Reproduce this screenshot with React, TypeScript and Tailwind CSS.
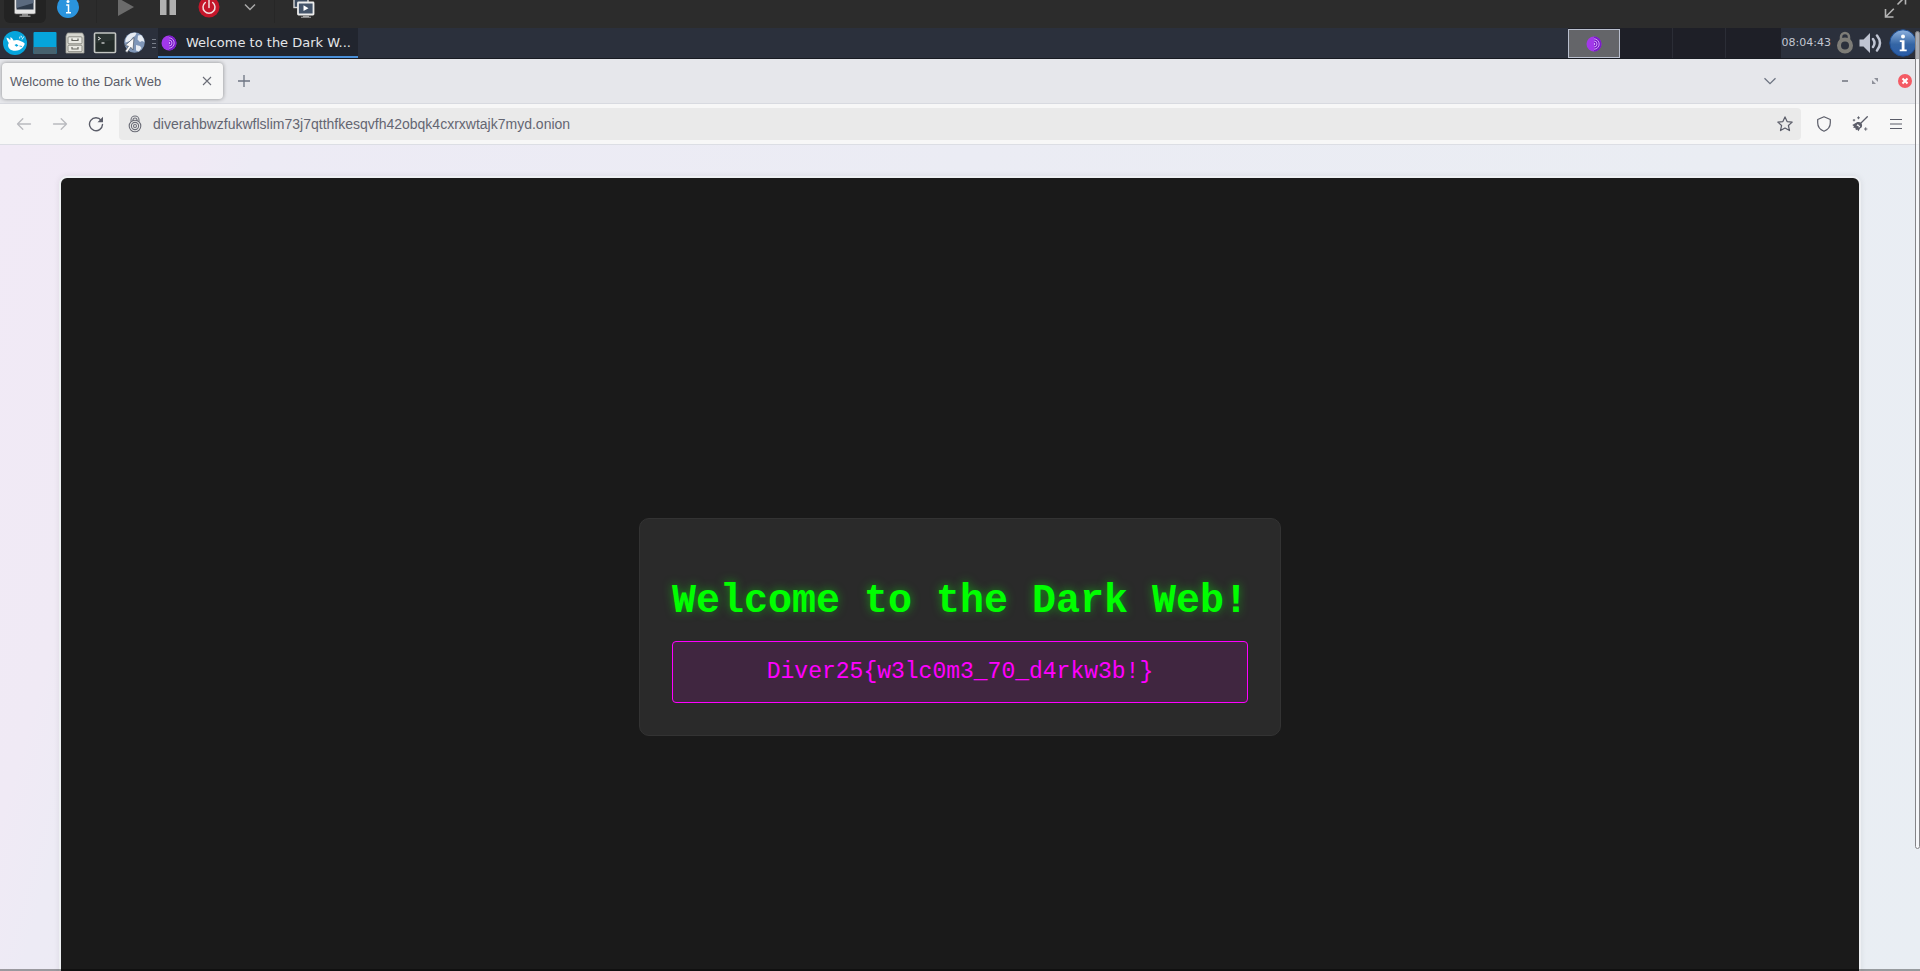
import React from 'react';

function MonitorIcon() {
  return (
    <svg viewBox="0 0 24 24" className="h-6 w-6">
      <rect x="1.500" y="0" width="21" height="19" rx="1.500" fill="#e6e6e6" stroke="#6b6b6b" strokeWidth="0.6" />
      <rect x="3.500" y="1" width="17" height="13.500" fill="#2e3a4a" />
      <path d="M3.500 1h17v7l-17 5z" fill="#5b6a7f" />
      <path d="M9 19h6v1.500h2.500V22h-11v-1.500H9z" fill="#8d8d8d" />
    </svg>
  );
}

function InfoIcon() {
  return (
    <svg viewBox="0 0 24 24" className="h-6 w-6">
      <circle cx="12" cy="12" r="11" fill="#2a94de" />
      <circle cx="12" cy="6.500" r="1.500" fill="#fff" />
      <path d="M10.200 10h2.300v7.500M10 17.800h5" stroke="#fff" strokeWidth="1.500" fill="none" />
    </svg>
  );
}

function PowerIcon() {
  return (
    <svg viewBox="0 0 24 24" className="h-6 w-6">
      <circle cx="12" cy="12" r="10.500" fill="#c4162a" />
      <path d="M8.300 7.500a6 6 0 1 0 7.400 0" fill="none" stroke="#f2dfe1" strokeWidth="1.500" strokeLinecap="round" />
      <path d="M12 5v7.500" stroke="#f2dfe1" strokeWidth="1.500" strokeLinecap="round" />
    </svg>
  );
}

function DisplaysIcon() {
  return (
    <svg viewBox="0 0 24 24" className="h-6 w-6">
      <rect x="2" y="0" width="14" height="12.500" fill="#3b4a5e" stroke="#d5d5d5" strokeWidth="1.400" />
      <rect x="6" y="7.500" width="15.500" height="12" rx="0.500" fill="#44546a" stroke="#ececec" strokeWidth="1.800" />
      <path d="M11.500 10.300l5 2.900-5 2.900z" fill="#fff" />
      <path d="M11 20.800h6v1h2v1H9v-1h2z" fill="#a8a8a8" />
    </svg>
  );
}

function ExpandIcon() {
  return (
    <svg viewBox="0 0 24 24" className="h-6 w-6" fill="none" stroke="#b4b4b4" strokeWidth="1.600">
      <path d="M2.500 14v8h8M2.800 21.700l8-8M14.500 9.500l8-8M14.500 1.500h8v8" />
    </svg>
  );
}

function XfceIcon() {
  return (
    <svg viewBox="0 0 24 24" className="h-6 w-6">
      <circle cx="12" cy="12" r="12" fill="#06a5dc" />
      <path d="M3.500 6.500C5.200 7 6.500 8 7.300 9.300L7.500 6c1.400.8 2.400 2 3 3.600 2.500-1 5-.9 6.800.3 1.800.6 3.300 1.300 4.500 2.900-.8 2.500-2.500 5-5.500 6.300-3.500 1.300-8 .7-9.800-1.400C4.700 15.800 4.700 13.600 5.800 12 4.800 10.300 3.500 8.500 3.500 6.500z" fill="#fff" />
      <path d="M11.500 14l2-1 2 1.500-2 1.200z" fill="#06a5dc" />
      <path d="M16.500 15l2.500.5" stroke="#06a5dc" strokeWidth="0.800" />
      <path d="M16.500 7.500l.5-2M19 8.500l1.800-3M18.700 6.500l-.7-1.800" stroke="#d9f3fc" strokeWidth="1" />
    </svg>
  );
}

function DesktopIcon() {
  return (
    <svg viewBox="0 0 24 24" className="h-6 w-6">
      <rect x="0.500" y="1" width="23" height="22" rx="1" fill="#06a5dc" />
      <path d="M0.500 16h23v6a1 1 0 0 1-1 1h-21a1 1 0 0 1-1-1z" fill="#47626f" />
    </svg>
  );
}

function CabinetIcon() {
  return (
    <svg viewBox="0 0 24 24" className="h-6 w-6">
      <path d="M4.500 2h15l1.500 3v17H3V5z" fill="#d6d6cf" stroke="#9a9a93" strokeWidth="0.800" />
      <rect x="5" y="5.800" width="14" height="7" rx="1" fill="#e9e9e3" stroke="#8a8a83" strokeWidth="1" />
      <rect x="5" y="14.200" width="14" height="6.500" rx="1" fill="#e9e9e3" stroke="#8a8a83" strokeWidth="1" />
      <path d="M9 7.500v2h6v-2M9 16v2h6v-2" fill="none" stroke="#66665f" strokeWidth="1.200" />
    </svg>
  );
}

function TerminalIcon() {
  return (
    <svg viewBox="0 0 24 24" className="h-6 w-6">
      <rect x="1.500" y="2" width="21" height="19.500" rx="1" fill="#2b3432" stroke="#c4c6c3" strokeWidth="1.600" />
      <path d="M3 12l18-3v11.500H3z" fill="#222a28" />
      <path d="M5 6l2.500 1.500L5 9" fill="none" stroke="#e8e8e8" strokeWidth="1" />
      <path d="M8.500 12h3" stroke="#e8e8e8" strokeWidth="1.200" />
    </svg>
  );
}

function GlobeIcon() {
  return (
    <svg viewBox="0 0 24 24" className="h-6 w-6">
      <circle cx="11.500" cy="11.500" r="10.300" fill="#7f96b8" />
      <path d="M4 5.500C7 2 11 1.300 13.500 2.200L12 5 9.500 6.500 7 10l-4.500 1.500C2 9 3 7 4 5.500zM15 4.500l3-.5c2 2 3.200 4.500 3.400 7l-2.400-1-2 1-2.500-2.500zM13 14l4 1 1.500 2-2.500 3.500-3-1z" fill="#e7ecf3" />
      <path d="M11 6.500L10 19l-2.200-2.700-3.600 5.200-2-1.400 3.300-4.900L2 14.500z" fill="#f7f7f7" stroke="#4b5563" strokeWidth="0.700" />
    </svg>
  );
}

function OnionIcon() {
  return (
    <svg viewBox="0 0 16 16" className="h-4 w-4">
      <circle cx="8" cy="8" r="7.500" fill="#a238ea" />
      <path d="M8 0.500a7.500 7.500 0 0 1 0 15z" fill="#7a1cc8" />
      <path d="M8 2.800a5.200 5.200 0 0 1 0 10.400M8 5a3 3 0 0 1 0 6" fill="none" stroke="#d9a5ff" strokeWidth="0.900" />
      <path d="M8 6.800a1.200 1.200 0 0 1 0 2.400z" fill="#d9a5ff" />
    </svg>
  );
}

function TrayLockIcon() {
  return (
    <svg viewBox="0 0 18 24" className="h-6 w-[18px]" fill="none" stroke="#7d7c77">
      <path d="M5 9.500V6a4 4 0 0 1 8 0v3.500" strokeWidth="2.500" />
      <circle cx="9" cy="14.500" r="6" strokeWidth="4" />
    </svg>
  );
}

function SpeakerIcon() {
  return (
    <svg viewBox="0 0 26 24" className="h-6 w-[26px]">
      <path d="M1.500 8.500h4L12 2v20l-6.500-6.500h-4z" fill="#bfc4d2" />
      <path d="M15 8q3 4 0 8M19 4.500q6 7.500 0 15" fill="none" stroke="#bfc4d2" strokeWidth="2.500" strokeLinecap="round" />
    </svg>
  );
}

function TrayInfoIcon() {
  return (
    <svg viewBox="0 0 28 28" className="h-7 w-7">
      <defs>
        <linearGradient id="tray-info" x1="0" y1="0" x2="0" y2="1">
          <stop offset="0" stopColor="#8fb3e0" />
          <stop offset="0.550" stopColor="#3465a4" />
          <stop offset="1" stopColor="#2a5ca8" />
        </linearGradient>
      </defs>
      <circle cx="14" cy="14" r="13.200" fill="url(#tray-info)" stroke="#1f4e92" strokeWidth="1" />
      <circle cx="14" cy="7.500" r="2" fill="#fff" />
      <path d="M10.800 11.200h4.700v9.300h2.200v1.700h-7v-1.700h2v-7.600h-1.900z" fill="#fff" />
    </svg>
  );
}

function ArrowIcon({ forward = false }: { forward?: boolean }) {
  return (
    <svg viewBox="0 0 16 16" className="h-4 w-4" fill="none" stroke="#b9babf" strokeWidth="1.300" strokeLinecap="round" strokeLinejoin="round">
      {forward ? <path d="M1.500 8h13M9.200 2.700L14.500 8l-5.300 5.300" /> : <path d="M14.500 8h-13M6.800 2.700L1.500 8l5.300 5.300" />}
    </svg>
  );
}

function ReloadIcon() {
  return (
    <svg viewBox="0 0 16 16" className="h-4 w-4">
      <path d="M13.200 4.300A6.500 6.500 0 1 0 14.500 8.500" fill="none" stroke="#5b5d69" strokeWidth="1.400" strokeLinecap="round" />
      <path d="M15 0.700v5.500H9.500z" fill="#5b5d69" />
    </svg>
  );
}

function OnionLockIcon() {
  return (
    <svg viewBox="0 0 14 18" className="h-[18px] w-[14px]" fill="none" stroke="#6b6d77" strokeWidth="1.100">
      <path d="M3 6.500V5a4 4 0 0 1 8 0v1.500M5 6V5a2 2 0 0 1 4 0v1" />
      <circle cx="7" cy="11" r="5.800" />
      <circle cx="7" cy="11" r="3.600" />
      <circle cx="7" cy="11" r="1.500" />
    </svg>
  );
}

function StarIcon() {
  return (
    <svg viewBox="0 0 16 16" className="h-4 w-4" fill="none" stroke="#5b5d69" strokeWidth="1.200" strokeLinejoin="round">
      <path d="M8 0.900l2.100 4.700 5.100.5-3.800 3.400 1.100 5.100L8 12l-4.500 2.600 1.100-5.100L.8 6.100l5.100-.5z" />
    </svg>
  );
}

function ShieldIcon() {
  return (
    <svg viewBox="0 0 16 16" className="h-4 w-4" fill="none" stroke="#5b5d69" strokeWidth="1.200" strokeLinejoin="round">
      <path d="M8 .8l6.300 2.700v3.300c0 3.700-2.500 7-6.300 8.400C4.200 13.800 1.700 10.500 1.700 6.800V3.500z" />
    </svg>
  );
}

function BroomIcon() {
  return (
    <svg viewBox="0 0 16 16" className="h-4 w-4">
      <path d="M15.300.7L8.500 7.500" stroke="#5b5d69" strokeWidth="1.300" strokeLinecap="round" />
      <path d="M4.500 6.500c1.300-.8 3.500-.4 4.500.5s1.500 2.700.7 4.200L8 12.500l-1.500 2.800-1.300-1.900L4 14.200l-.8-2.500-1.900.3.600-1.800L.3 8.900z" fill="#5b5d69" />
      <path d="M5.700 8l2.600 2.500-1.500 1.200-.4-1.700-1.900-.3z" fill="#f7f7f7" />
      <path d="M6.500.3v2.900M5 1.800h3M2 3v2.400M.8 4.200h2.400M13.700 11.300v3.400M12 13h3.400" stroke="#5b5d69" strokeWidth="0.900" />
    </svg>
  );
}

export default function App() {
  return (
    <div className="relative flex h-screen flex-col overflow-hidden bg-[#e9edf2] font-['Liberation_Sans',sans-serif]">
      <header className="h-7 shrink-0 overflow-hidden bg-[#2c2c2c]">
        <div className="-mt-[9px] flex h-8 items-center">
          <button aria-label="Console" className="ml-1 flex h-8 w-[42px] items-center justify-center rounded-md bg-[#232323]"><MonitorIcon /></button>
          <button aria-label="Details" className="ml-2.5 flex h-6 w-6"><InfoIcon /></button>
          <span className="ml-4 h-8 w-px bg-[#272727]" />
          <button aria-label="Run" className="ml-5 flex h-6 w-[18px] items-center">
            <svg viewBox="0 0 18 20" className="h-5 w-[18px]"><path d="M1 1l16 9-16 9z" fill="#6b6b6b" /></svg>
          </button>
          <button aria-label="Pause" className="ml-[25px] flex h-6 w-4 items-center">
            <svg viewBox="0 0 16 16" className="h-4 w-4"><path d="M0 0h6.500v16H0zM9.500 0H16v16H9.500z" fill="#b0b0b0" /></svg>
          </button>
          <button aria-label="Shut down" className="ml-[21px] flex h-6 w-6"><PowerIcon /></button>
          <button aria-label="Shut down options" className="ml-[23px] flex h-6 w-3 items-center">
            <svg viewBox="0 0 12 8" className="h-2 w-3"><path d="M1 1.500l5 5 5-5" fill="none" stroke="#a9a9a9" strokeWidth="1.500" /></svg>
          </button>
          <span className="ml-[18px] h-8 w-px bg-[#272727]" />
          <button aria-label="Snapshots" className="ml-[17px] flex h-6 w-6"><DisplaysIcon /></button>
          <button aria-label="Fullscreen" className="mr-[13px] ml-auto flex h-6 w-6"><ExpandIcon /></button>
        </div>
      </header>

      <div className="flex h-[31px] shrink-0 items-stretch border-b border-[#181b22] bg-[#2b303c]">
        <nav aria-label="Launchers" className="flex items-center gap-1.5 pl-[3px]">
          <button aria-label="Applications"><XfceIcon /></button>
          <button aria-label="Show desktop"><DesktopIcon /></button>
          <button aria-label="Files"><CabinetIcon /></button>
          <button aria-label="Terminal"><TerminalIcon /></button>
          <button aria-label="Web browser"><GlobeIcon /></button>
        </nav>
        <span className="ml-[5px] flex w-1 flex-col justify-center gap-[3px]">
          <i className="h-px bg-[#7a7f8a]" />
          <i className="h-px bg-[#7a7f8a]" />
          <i className="h-px bg-[#7a7f8a]" />
        </span>
        <button className="ml-0.5 flex w-[200px] items-center gap-[9px] border-b-2 border-[#4a90d9] bg-[#21252e] pt-px pl-[3px] font-['DejaVu_Sans',sans-serif] text-[13px] whitespace-nowrap text-[#e4e5e8]">
          <OnionIcon />
          Welcome to the Dark W...
        </button>
        <div className="ml-auto flex bg-[#1e1f27]">
          <span className="my-px flex h-[29px] w-[52px] items-center justify-center border border-[#b9bfce] bg-[#646569]"><OnionIcon /></span>
          <span className="w-[53px] border-r border-[#2b2d36]" />
          <span className="w-[53px] border-r border-[#2b2d36]" />
          <span className="w-[55px]" />
        </div>
        <div className="flex items-center pr-[3px] pl-px">
          <time className="font-['DejaVu_Sans',sans-serif] text-[11px] text-[#c3c7d2]">08:04:43</time>
          <span className="ml-[5px]"><TrayLockIcon /></span>
          <span className="ml-1"><SpeakerIcon /></span>
          <span className="ml-[5px]"><TrayInfoIcon /></span>
        </div>
      </div>

      <div className="flex h-[45px] shrink-0 items-center border-b border-[#d8dae0] bg-[#e6e7eb] pl-0.5">
        <div className="flex h-9 w-[221px] items-center justify-between rounded bg-[#f7f7f7] pr-2 pl-2 text-[13px] text-[#5b5d69] shadow-[0_0_4px_rgba(0,0,0,0.4)]">
          <span className="pt-px">Welcome to the Dark Web</span>
          <button aria-label="Close tab" className="flex h-4 w-4 items-center justify-center">
            <svg viewBox="0 0 10 10" className="h-2.5 w-2.5"><path d="M1 1l8 8M9 1L1 9" stroke="#6b6d77" strokeWidth="1.100" /></svg>
          </button>
        </div>
        <button aria-label="New tab" className="ml-[7px] flex h-7 w-7 items-center justify-center">
          <svg viewBox="0 0 14 14" className="h-3.5 w-3.5"><path d="M7 1v12M1 7h12" stroke="#6d7482" strokeWidth="1.300" /></svg>
        </button>
        <button aria-label="List all tabs" className="mr-[46px] ml-auto flex h-7 w-7 items-center justify-center">
          <svg viewBox="0 0 14 8" className="h-2 w-3.5"><path d="M1.500 1.200L7 6.700l5.500-5.500" fill="none" stroke="#6d7482" strokeWidth="1.300" /></svg>
        </button>
        <div className="flex">
          <button aria-label="Minimize" className="flex h-7 w-[30px] items-center justify-center"><span className="h-0.5 w-1.5 bg-[#8d9099]" /></button>
          <button aria-label="Restore" className="flex h-7 w-[30px] items-center justify-center">
            <svg viewBox="0 0 6 6" className="h-1.5 w-1.5"><path d="M2 0h4v4zM0 2l4 4H0z" fill="#8d9099" /></svg>
          </button>
          <button aria-label="Close window" className="flex h-7 w-[30px] items-center justify-center">
            <svg viewBox="0 0 14 14" className="h-3.5 w-3.5"><circle cx="7" cy="7" r="7" fill="#f45b64" /><path d="M4.500 4.500l5 5M9.500 4.500l-5 5" stroke="#fff" strokeWidth="2" /></svg>
          </button>
        </div>
      </div>

      <div className="flex h-[41px] shrink-0 items-center border-b border-[#dcdee4] bg-[#f7f7f7] px-1.5">
        <button aria-label="Back" className="flex h-8 w-9 items-center justify-center"><ArrowIcon /></button>
        <button aria-label="Forward" className="flex h-8 w-9 items-center justify-center"><ArrowIcon forward /></button>
        <button aria-label="Reload" className="flex h-8 w-9 items-center justify-center"><ReloadIcon /></button>
        <div className="mx-[5px] flex h-8 flex-1 items-center rounded bg-[#eaeaea] pr-2 pl-[9px]">
          <OnionLockIcon />
          <input
            aria-label="Address"
            type="text"
            defaultValue="diverahbwzfukwflslim73j7qtthfkesqvfh42obqk4cxrxwtajk7myd.onion"
            className="ml-[11px] min-w-0 flex-1 bg-transparent text-[14px] text-[#646672] outline-none"
          />
          <button aria-label="Bookmark"><StarIcon /></button>
        </div>
        <button aria-label="Security level" className="flex h-8 w-9 items-center justify-center"><ShieldIcon /></button>
        <button aria-label="New identity" className="flex h-8 w-9 items-center justify-center"><BroomIcon /></button>
        <button aria-label="Menu" className="flex h-8 w-9 items-center justify-center">
          <svg viewBox="0 0 12 12" className="h-3 w-3"><path d="M0 1.500h12M0 6h12M0 10.500h12" stroke="#5b5d69" strokeWidth="1.200" /></svg>
        </button>
      </div>

      <main className="min-h-0 flex-1 overflow-hidden bg-[linear-gradient(106deg,#f1eaf6_0%,#f0eaf5_9%,#edebf5_12%,#ebecf4_45%,#eaedf3_80%,#e9eef3_100%)] px-[59px] pt-[31px]">
        <div className="flex h-[902px] items-center justify-center rounded-lg border-2 border-[#eef0f3] bg-[#1a1a1a] shadow-[0_0_6px_rgba(0,0,0,0.08)]">
          <section className="rounded-[10px] border border-[#333333] bg-[#2a2a2a] p-8 text-center font-['Liberation_Mono',monospace]">
            <h1 className="mt-7 mb-[17px] text-[40px] leading-[45px] font-bold text-[#00ff00] [text-shadow:0_0_10px_rgba(0,255,0,0.5)]">
              Welcome to the Dark Web!
            </h1>
            <p className="rounded border border-[#ff00ff] bg-[#ff00ff]/10 py-4 text-[23px] leading-7 text-[#ff00ff]">
              Diver25&#123;w3lc0m3_70_d4rkw3b!&#125;
            </p>
          </section>
        </div>
      </main>

      <div className="absolute top-[31px] right-0 h-[818px] w-[5px] rounded-sm border border-[#858588] bg-white/60" />
      <div className="absolute inset-x-0 bottom-0 h-0.5 bg-black/35" />
    </div>
  );
}
